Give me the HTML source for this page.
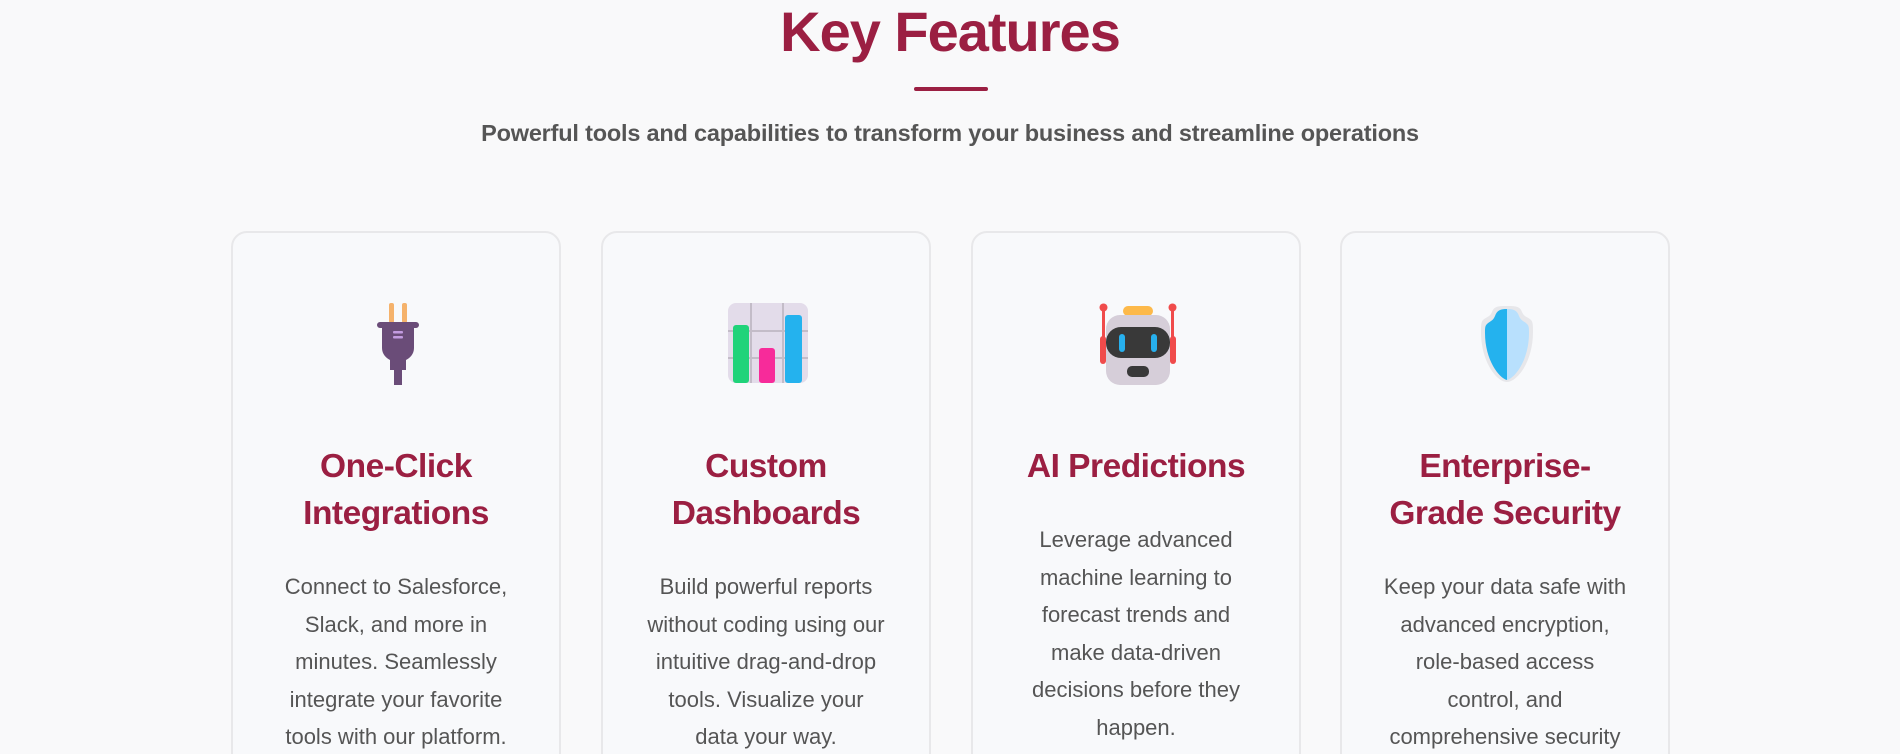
<!DOCTYPE html>
<html><head><meta charset="utf-8"><style>
*{margin:0;padding:0;box-sizing:border-box}
html,body{width:1900px;height:754px;overflow:hidden}
body{background:#f9f9fa;font-family:"Liberation Sans",Arial,sans-serif}
#w{position:relative;width:1900px;height:754px;overflow:hidden}
h1{position:absolute;top:0;left:0;width:1900px;text-align:center;font-size:56px;line-height:64px;color:#9b1f42;font-weight:700;letter-spacing:-1px}
.bar{position:absolute;left:914px;top:87px;width:74px;height:4px;background:#9b1f42;border-radius:2px}
.sub{position:absolute;top:118px;left:0;width:1900px;text-align:center;font-size:23.5px;line-height:30px;color:#555;font-weight:700;letter-spacing:-0.2px}
.card{position:absolute;top:231px;width:330px;height:560px;background:#f8f9fb;border:2px solid #e8e8ea;border-radius:16px;text-align:center}
.icon{position:absolute;top:70px;left:125px;width:80px;height:82px}
.t{position:absolute;top:210px;left:0;width:326px;font-size:33.5px;line-height:47px;color:#9b1f42;font-weight:700;letter-spacing:-0.5px}
.d{position:absolute;left:0;width:326px;font-size:22px;line-height:37.6px;color:#555}
</style></head><body><div id="w">
<h1>Key Features</h1>
<div class="bar"></div>
<div class="sub">Powerful tools and capabilities to transform your business and streamline operations</div>

<div class="card" style="left:231px">
<svg class="icon" viewBox="0 0 80 82"><rect x="31" y="0" width="5" height="20" rx="2" fill="#f5b26b"/><rect x="44" y="0" width="5" height="20" rx="2" fill="#f5b26b"/><path d="M22 19h36a3 3 0 0 1 0 6h-2v20c0 6-4 10-8 12v10h-16v-10c-4-2-8-6-8-12v-20h-2a3 3 0 0 1 0-6z" fill="#6a4c78"/><rect x="36" y="62" width="8" height="20" fill="#6a4c78"/><rect x="35" y="28" width="10" height="2.5" rx="1" fill="#c39be0"/><rect x="35" y="33" width="10" height="2.5" rx="1" fill="#c39be0"/></svg>
<div class="t">One-Click<br>Integrations</div>
<div class="d" style="top:335px">Connect to Salesforce,<br>Slack, and more in<br>minutes. Seamlessly<br>integrate your favorite<br>tools with our platform.</div>
</div>

<div class="card" style="left:601px">
<svg class="icon" viewBox="0 0 80 82"><rect x="0" y="0" width="80" height="80" rx="8" fill="#e3dcea"/><g stroke="#c3bcc8" stroke-width="2"><line x1="23" y1="0" x2="23" y2="80"/><line x1="55" y1="0" x2="55" y2="80"/><line x1="0" y1="28" x2="80" y2="28"/><line x1="0" y1="55" x2="80" y2="55"/></g><rect x="5" y="22" width="16" height="58" rx="3" fill="#20d37a"/><rect x="31" y="45" width="16" height="35" rx="3" fill="#f72b9a"/><rect x="57" y="12" width="17" height="68" rx="3" fill="#24b2ee"/></svg>
<div class="t">Custom<br>Dashboards</div>
<div class="d" style="top:335px">Build powerful reports<br>without coding using our<br>intuitive drag-and-drop<br>tools. Visualize your<br>data your way.</div>
</div>

<div class="card" style="left:971px">
<svg class="icon" viewBox="0 0 80 82"><rect x="4" y="4" width="3" height="55" fill="#f04b4b"/><rect x="73" y="4" width="3" height="55" fill="#f04b4b"/><circle cx="5.5" cy="4.5" r="4" fill="#f04b4b"/><circle cx="74.5" cy="4.5" r="4" fill="#f04b4b"/><rect x="2" y="33" width="6" height="28" rx="3" fill="#f04b4b"/><rect x="72" y="33" width="6" height="28" rx="3" fill="#f04b4b"/><rect x="25" y="3" width="30" height="10" rx="5" fill="#fdb94a"/><rect x="8" y="12" width="64" height="70" rx="14" fill="#d6ced9"/><rect x="8" y="24" width="64" height="31" rx="15" fill="#393939"/><rect x="21" y="31" width="6" height="18" rx="3" fill="#27b0ee"/><rect x="53" y="31" width="6" height="18" rx="3" fill="#27b0ee"/><rect x="29" y="63" width="22" height="11" rx="5" fill="#393939"/></svg>
<div class="t">AI Predictions</div>
<div class="d" style="top:288px">Leverage advanced<br>machine learning to<br>forecast trends and<br>make data-driven<br>decisions before they<br>happen.</div>
</div>

<div class="card" style="left:1340px">
<svg class="icon" viewBox="0 0 80 82"><path d="M40 3c-8 0-13 0-15 6-2 5-6 5-9 8-2 2-2 6-2 12 0 30 16 50 26 50s26-20 26-50c0-6 0-10-2-12-3-3-7-3-9-8-2-6-7-6-15-6z" fill="#e7e7ea"/><path d="M40 6v71c-8-2-22-20-22-47 0-5 0-7 2-9 3-3 6-3 8-8 2-6 6-7 12-7z" fill="#24b2ee"/><path d="M40 6v71c8-2 22-20 22-47 0-5 0-7-2-9-3-3-6-3-8-8-2-6-6-7-12-7z" fill="#b8e0fd"/></svg>
<div class="t">Enterprise-<br>Grade Security</div>
<div class="d" style="top:335px">Keep your data safe with<br>advanced encryption,<br>role-based access<br>control, and<br>comprehensive security</div>
</div>
</div></body></html>
